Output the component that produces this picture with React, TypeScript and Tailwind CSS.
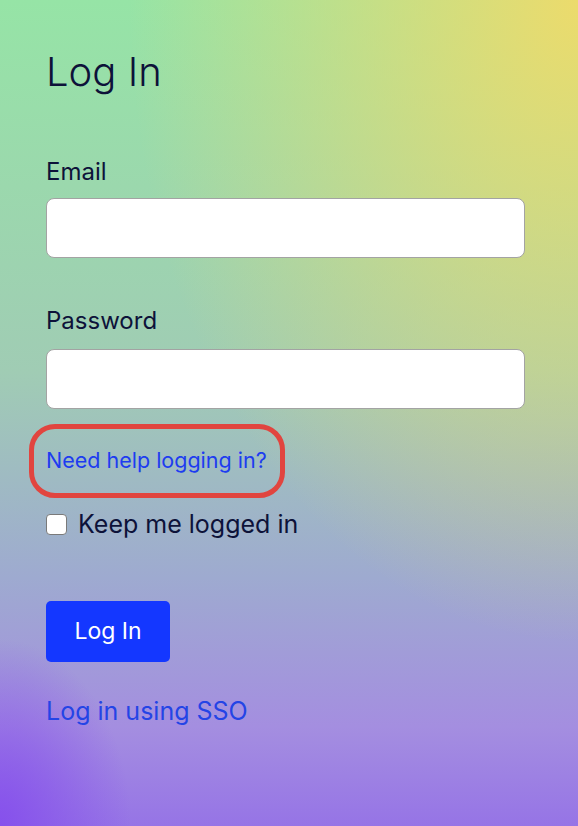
import React from "react";

export default function App() {
  return (
    <div className="min-h-[826px] w-full bg-[radial-gradient(ellipse_at_100%_0%,#ecdb6c_0%,rgba(236,219,108,0)_55%),radial-gradient(ellipse_at_0%_100%,#8650ec_0%,rgba(134,80,236,0)_16%),linear-gradient(to_bottom,#96e4a6_0%,#a0ccb4_45%,#9eaad0_70%,#a48ee0_88%,#9674e6_100%)] font-['Inter','Noto_Sans',sans-serif] text-[#0d1239]">
      <div className="flex flex-col pl-[46px] pt-[44px]">
        <h1 className="text-[40px] font-light leading-[56px]">Log In</h1>

        <label className="mt-[57px] text-[24px] leading-[30px]">Email</label>
        <input
          type="email"
          className="mt-[11px] h-[60px] w-[479px] rounded-[8px] border border-[#a3a3a3] bg-white"
        />

        <label className="mt-[48px] text-[24px] leading-[30px]">Password</label>
        <input
          type="password"
          className="mt-[13px] h-[60px] w-[479px] rounded-[8px] border border-[#a3a3a3] bg-white"
        />

        <div className="mt-[39px] flex">
          <a className="relative text-[21.5px] leading-[24px] text-[#1d3cf0]" href="#">
            Need help logging in?
            <span className="pointer-events-none absolute left-[-17px] right-[-18px] top-[-24px] bottom-[-26px] rounded-[26px] border-[5px] border-[#e1453f]" />
          </a>
        </div>

        <label className="mt-[37px] flex items-center gap-[11px] text-[25px] leading-[30px]">
          <span className="h-[21px] w-[21px] rounded-[4px] border border-[#7a7a7a] bg-white" />
          Keep me logged in
        </label>

        <div className="mt-[62px] flex">
          <button className="h-[61px] w-[124px] rounded-[5px] bg-[#1437ff] text-[23px] text-white">
            Log In
          </button>
        </div>

        <a className="mt-[34px] text-[25px] leading-[30px] text-[#2444e6]" href="#">
          Log in using SSO
        </a>
      </div>
    </div>
  );
}
